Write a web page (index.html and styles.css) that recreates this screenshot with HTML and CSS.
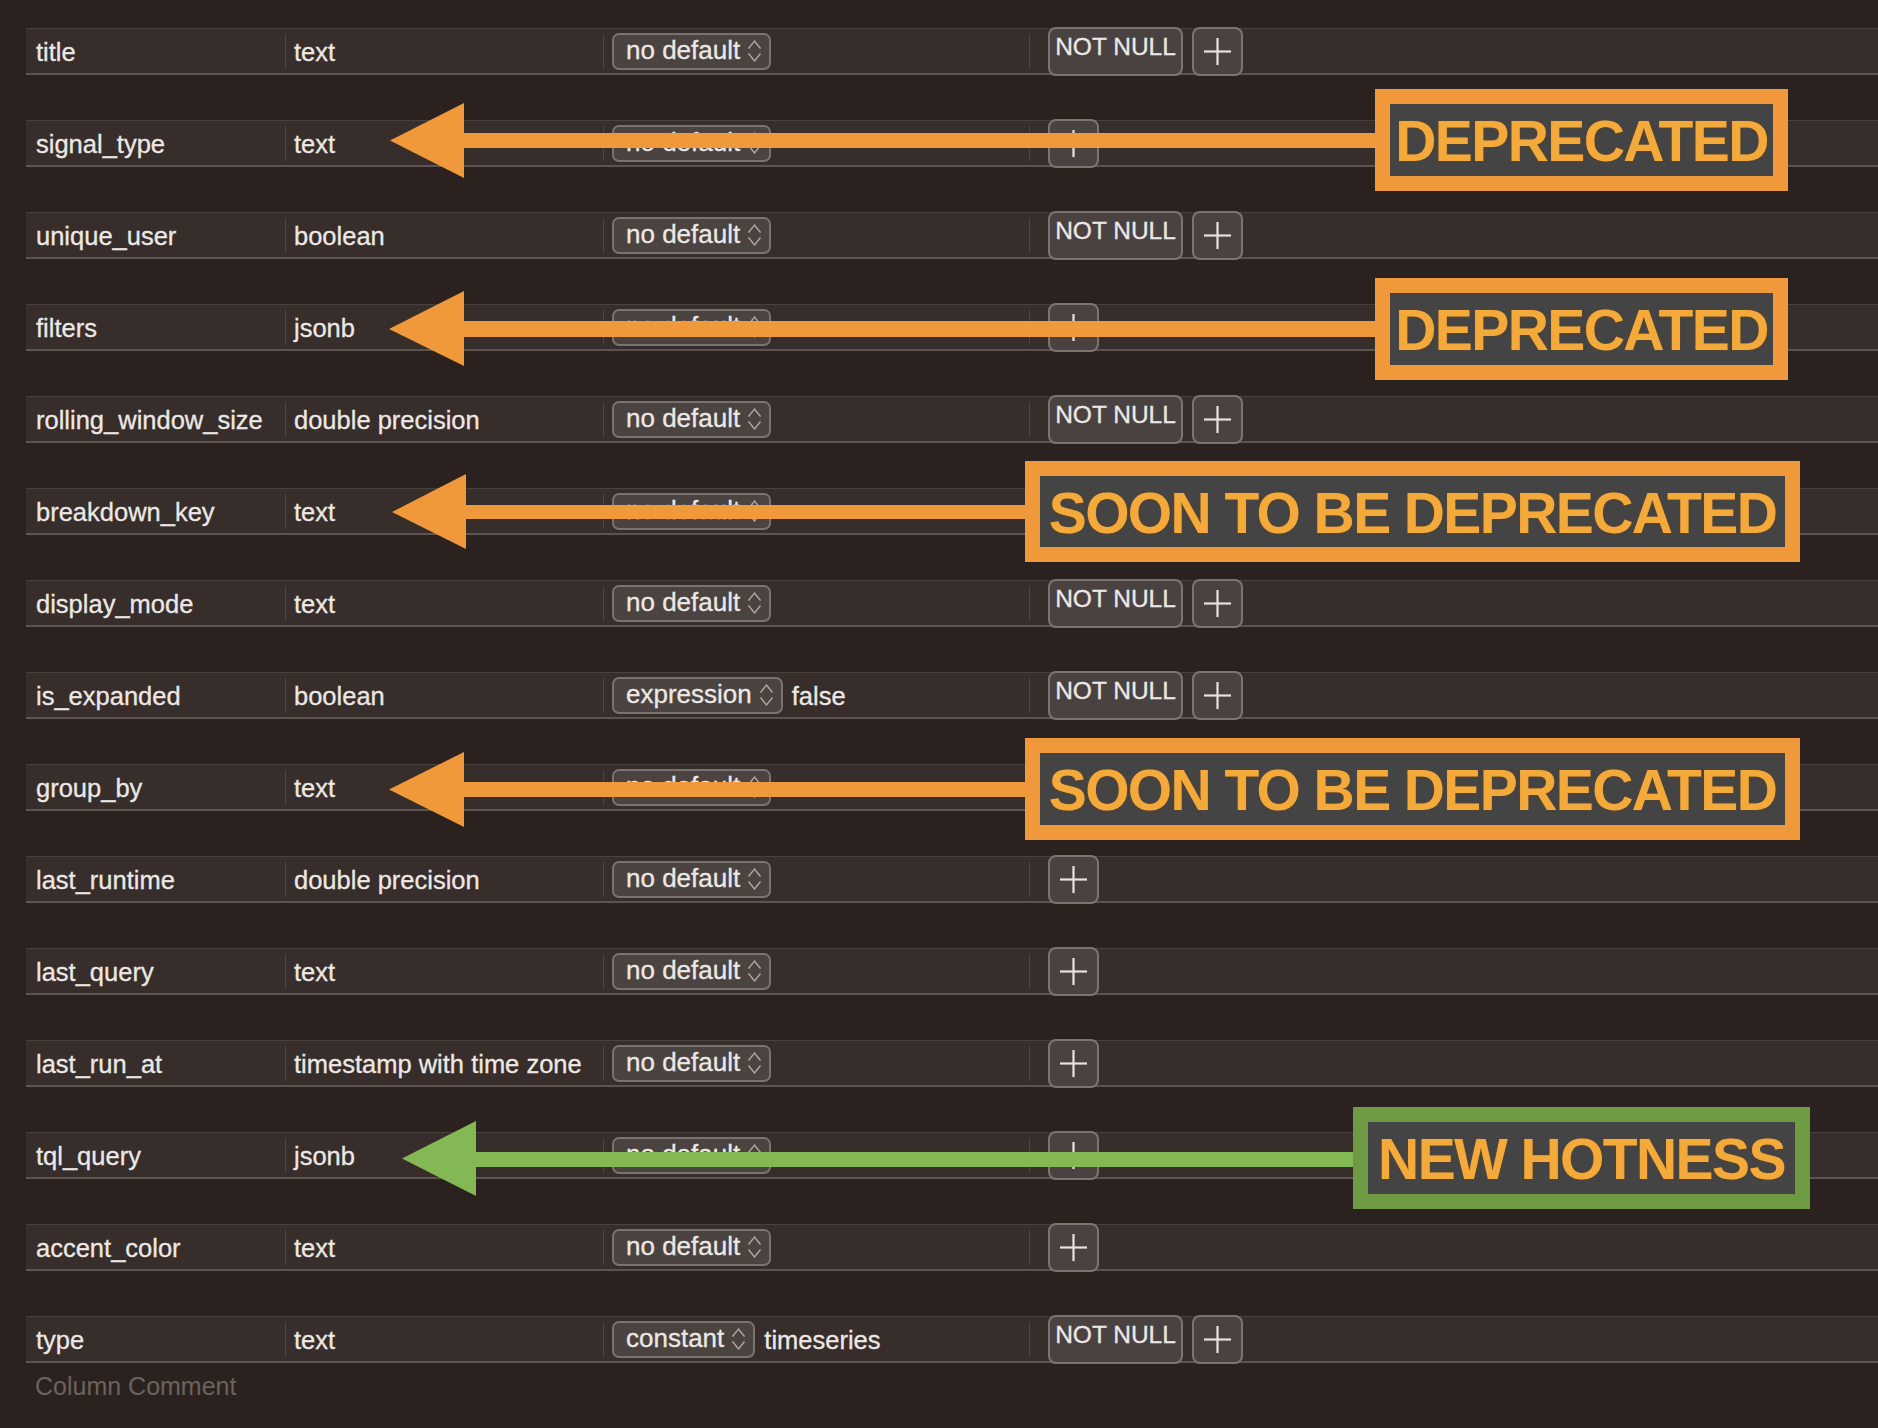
FILE: index.html
```html
<!DOCTYPE html>
<html lang="en">
<head>
    <meta charset="UTF-8">
    <meta name="viewport" content="width=device-width, initial-scale=1.0">
    <title>Table Structure</title>
    <link rel="stylesheet" href="styles.css">
</head>
<body>
    <div class="page">
        <div class="columns">
            <div class="row">
                <div class="cell name">title</div><div class="sep"></div>
                <div class="cell type">text</div><div class="sep"></div>
                <div class="cell default"><span class="select">no default<svg class="chev" viewBox="0 0 15 24"><polyline points="1.5,9.5 7.5,2 13.5,9.5"/><polyline points="1.5,14.5 7.5,22 13.5,14.5"/></svg></span></div><div class="sep"></div>
                <div class="cell flags"><button class="not-null">NOT NULL</button><button class="add"><svg viewBox="0 0 27 27"><line x1="0" y1="13.5" x2="27" y2="13.5"/><line x1="13.5" y1="0" x2="13.5" y2="27"/></svg></button></div>
            </div>
            <div class="row">
                <div class="cell name">signal_type</div><div class="sep"></div>
                <div class="cell type">text</div><div class="sep"></div>
                <div class="cell default"><span class="select">no default<svg class="chev" viewBox="0 0 15 24"><polyline points="1.5,9.5 7.5,2 13.5,9.5"/><polyline points="1.5,14.5 7.5,22 13.5,14.5"/></svg></span></div><div class="sep"></div>
                <div class="cell flags"><button class="add"><svg viewBox="0 0 27 27"><line x1="0" y1="13.5" x2="27" y2="13.5"/><line x1="13.5" y1="0" x2="13.5" y2="27"/></svg></button></div>
            </div>
            <div class="row">
                <div class="cell name">unique_user</div><div class="sep"></div>
                <div class="cell type">boolean</div><div class="sep"></div>
                <div class="cell default"><span class="select">no default<svg class="chev" viewBox="0 0 15 24"><polyline points="1.5,9.5 7.5,2 13.5,9.5"/><polyline points="1.5,14.5 7.5,22 13.5,14.5"/></svg></span></div><div class="sep"></div>
                <div class="cell flags"><button class="not-null">NOT NULL</button><button class="add"><svg viewBox="0 0 27 27"><line x1="0" y1="13.5" x2="27" y2="13.5"/><line x1="13.5" y1="0" x2="13.5" y2="27"/></svg></button></div>
            </div>
            <div class="row">
                <div class="cell name">filters</div><div class="sep"></div>
                <div class="cell type">jsonb</div><div class="sep"></div>
                <div class="cell default"><span class="select">no default<svg class="chev" viewBox="0 0 15 24"><polyline points="1.5,9.5 7.5,2 13.5,9.5"/><polyline points="1.5,14.5 7.5,22 13.5,14.5"/></svg></span></div><div class="sep"></div>
                <div class="cell flags"><button class="add"><svg viewBox="0 0 27 27"><line x1="0" y1="13.5" x2="27" y2="13.5"/><line x1="13.5" y1="0" x2="13.5" y2="27"/></svg></button></div>
            </div>
            <div class="row">
                <div class="cell name">rolling_window_size</div><div class="sep"></div>
                <div class="cell type">double precision</div><div class="sep"></div>
                <div class="cell default"><span class="select">no default<svg class="chev" viewBox="0 0 15 24"><polyline points="1.5,9.5 7.5,2 13.5,9.5"/><polyline points="1.5,14.5 7.5,22 13.5,14.5"/></svg></span></div><div class="sep"></div>
                <div class="cell flags"><button class="not-null">NOT NULL</button><button class="add"><svg viewBox="0 0 27 27"><line x1="0" y1="13.5" x2="27" y2="13.5"/><line x1="13.5" y1="0" x2="13.5" y2="27"/></svg></button></div>
            </div>
            <div class="row">
                <div class="cell name">breakdown_key</div><div class="sep"></div>
                <div class="cell type">text</div><div class="sep"></div>
                <div class="cell default"><span class="select">no default<svg class="chev" viewBox="0 0 15 24"><polyline points="1.5,9.5 7.5,2 13.5,9.5"/><polyline points="1.5,14.5 7.5,22 13.5,14.5"/></svg></span></div><div class="sep"></div>
                <div class="cell flags"><button class="add"><svg viewBox="0 0 27 27"><line x1="0" y1="13.5" x2="27" y2="13.5"/><line x1="13.5" y1="0" x2="13.5" y2="27"/></svg></button></div>
            </div>
            <div class="row">
                <div class="cell name">display_mode</div><div class="sep"></div>
                <div class="cell type">text</div><div class="sep"></div>
                <div class="cell default"><span class="select">no default<svg class="chev" viewBox="0 0 15 24"><polyline points="1.5,9.5 7.5,2 13.5,9.5"/><polyline points="1.5,14.5 7.5,22 13.5,14.5"/></svg></span></div><div class="sep"></div>
                <div class="cell flags"><button class="not-null">NOT NULL</button><button class="add"><svg viewBox="0 0 27 27"><line x1="0" y1="13.5" x2="27" y2="13.5"/><line x1="13.5" y1="0" x2="13.5" y2="27"/></svg></button></div>
            </div>
            <div class="row">
                <div class="cell name">is_expanded</div><div class="sep"></div>
                <div class="cell type">boolean</div><div class="sep"></div>
                <div class="cell default"><span class="select">expression<svg class="chev" viewBox="0 0 15 24"><polyline points="1.5,9.5 7.5,2 13.5,9.5"/><polyline points="1.5,14.5 7.5,22 13.5,14.5"/></svg></span><span class="value">false</span></div><div class="sep"></div>
                <div class="cell flags"><button class="not-null">NOT NULL</button><button class="add"><svg viewBox="0 0 27 27"><line x1="0" y1="13.5" x2="27" y2="13.5"/><line x1="13.5" y1="0" x2="13.5" y2="27"/></svg></button></div>
            </div>
            <div class="row">
                <div class="cell name">group_by</div><div class="sep"></div>
                <div class="cell type">text</div><div class="sep"></div>
                <div class="cell default"><span class="select">no default<svg class="chev" viewBox="0 0 15 24"><polyline points="1.5,9.5 7.5,2 13.5,9.5"/><polyline points="1.5,14.5 7.5,22 13.5,14.5"/></svg></span></div><div class="sep"></div>
                <div class="cell flags"><button class="add"><svg viewBox="0 0 27 27"><line x1="0" y1="13.5" x2="27" y2="13.5"/><line x1="13.5" y1="0" x2="13.5" y2="27"/></svg></button></div>
            </div>
            <div class="row">
                <div class="cell name">last_runtime</div><div class="sep"></div>
                <div class="cell type">double precision</div><div class="sep"></div>
                <div class="cell default"><span class="select">no default<svg class="chev" viewBox="0 0 15 24"><polyline points="1.5,9.5 7.5,2 13.5,9.5"/><polyline points="1.5,14.5 7.5,22 13.5,14.5"/></svg></span></div><div class="sep"></div>
                <div class="cell flags"><button class="add"><svg viewBox="0 0 27 27"><line x1="0" y1="13.5" x2="27" y2="13.5"/><line x1="13.5" y1="0" x2="13.5" y2="27"/></svg></button></div>
            </div>
            <div class="row">
                <div class="cell name">last_query</div><div class="sep"></div>
                <div class="cell type">text</div><div class="sep"></div>
                <div class="cell default"><span class="select">no default<svg class="chev" viewBox="0 0 15 24"><polyline points="1.5,9.5 7.5,2 13.5,9.5"/><polyline points="1.5,14.5 7.5,22 13.5,14.5"/></svg></span></div><div class="sep"></div>
                <div class="cell flags"><button class="add"><svg viewBox="0 0 27 27"><line x1="0" y1="13.5" x2="27" y2="13.5"/><line x1="13.5" y1="0" x2="13.5" y2="27"/></svg></button></div>
            </div>
            <div class="row">
                <div class="cell name">last_run_at</div><div class="sep"></div>
                <div class="cell type">timestamp with time zone</div><div class="sep"></div>
                <div class="cell default"><span class="select">no default<svg class="chev" viewBox="0 0 15 24"><polyline points="1.5,9.5 7.5,2 13.5,9.5"/><polyline points="1.5,14.5 7.5,22 13.5,14.5"/></svg></span></div><div class="sep"></div>
                <div class="cell flags"><button class="add"><svg viewBox="0 0 27 27"><line x1="0" y1="13.5" x2="27" y2="13.5"/><line x1="13.5" y1="0" x2="13.5" y2="27"/></svg></button></div>
            </div>
            <div class="row">
                <div class="cell name">tql_query</div><div class="sep"></div>
                <div class="cell type">jsonb</div><div class="sep"></div>
                <div class="cell default"><span class="select">no default<svg class="chev" viewBox="0 0 15 24"><polyline points="1.5,9.5 7.5,2 13.5,9.5"/><polyline points="1.5,14.5 7.5,22 13.5,14.5"/></svg></span></div><div class="sep"></div>
                <div class="cell flags"><button class="add"><svg viewBox="0 0 27 27"><line x1="0" y1="13.5" x2="27" y2="13.5"/><line x1="13.5" y1="0" x2="13.5" y2="27"/></svg></button></div>
            </div>
            <div class="row">
                <div class="cell name">accent_color</div><div class="sep"></div>
                <div class="cell type">text</div><div class="sep"></div>
                <div class="cell default"><span class="select">no default<svg class="chev" viewBox="0 0 15 24"><polyline points="1.5,9.5 7.5,2 13.5,9.5"/><polyline points="1.5,14.5 7.5,22 13.5,14.5"/></svg></span></div><div class="sep"></div>
                <div class="cell flags"><button class="add"><svg viewBox="0 0 27 27"><line x1="0" y1="13.5" x2="27" y2="13.5"/><line x1="13.5" y1="0" x2="13.5" y2="27"/></svg></button></div>
            </div>
            <div class="row">
                <div class="cell name">type</div><div class="sep"></div>
                <div class="cell type">text</div><div class="sep"></div>
                <div class="cell default"><span class="select">constant<svg class="chev" viewBox="0 0 15 24"><polyline points="1.5,9.5 7.5,2 13.5,9.5"/><polyline points="1.5,14.5 7.5,22 13.5,14.5"/></svg></span><span class="value">timeseries</span></div><div class="sep"></div>
                <div class="cell flags"><button class="not-null">NOT NULL</button><button class="add"><svg viewBox="0 0 27 27"><line x1="0" y1="13.5" x2="27" y2="13.5"/><line x1="13.5" y1="0" x2="13.5" y2="27"/></svg></button></div>
            </div>
        </div>
        <div class="comment">Column Comment</div>

        <!-- annotation arrows drawn over the table -->
        <svg class="arrows" width="1878" height="1428" viewBox="0 0 1878 1428">
            <g class="orange">
                <polygon points="390,140.5 464,103 464,178"/>
                <rect x="463" y="133" width="914" height="15"/>
                <polygon points="389,329 464,291 464,366"/>
                <rect x="463" y="321" width="914" height="16"/>
                <polygon points="392,512 466,474 466,549"/>
                <rect x="465" y="505" width="562" height="14"/>
                <polygon points="389,789.5 464,752 464,827"/>
                <rect x="463" y="782" width="564" height="15"/>
            </g>
            <g class="green">
                <polygon points="402,1158.5 476,1121 476,1196"/>
                <rect x="475" y="1152" width="881" height="15"/>
            </g>
        </svg>
        <div class="callout deprecated-a">DEPRECATED</div>
        <div class="callout deprecated-b">DEPRECATED</div>
        <div class="callout soon-a">SOON TO BE DEPRECATED</div>
        <div class="callout soon-b">SOON TO BE DEPRECATED</div>
        <div class="callout hotness">NEW HOTNESS</div>
    </div>
</body>
</html>
```

FILE: styles.css
```css
html, body {
    margin: 0;
    background-color: #2b221f;
}

body {
    color: #ece8e5;
    font-family: "Liberation Sans", Arial, sans-serif;
    overflow: hidden;
}

.page {
    position: relative;
    width: 1878px;
    height: 1428px;
    padding: 28px 0 0 26px;
    box-sizing: border-box;
}

.row {
    display: flex;
    align-items: center;
    height: 47px;
    box-sizing: border-box;
    margin-bottom: 45px;
    background-color: #372d2a;
    border-top: 1px solid #4a403c;
    border-bottom: 2px solid #5d5450;
    font-size: 25.5px;
    -webkit-text-stroke: 0.3px #ece8e5;
}

.row:last-child {
    margin-bottom: 0;
}

.cell {
    display: flex;
    align-items: center;
    height: 100%;
    white-space: nowrap;
    padding-top: 2px;
    box-sizing: border-box;
}

.sep {
    width: 1px;
    height: 35px;
    background-color: #4e4541;
    flex: none;
}

.name {
    width: 259px;
    padding-left: 10px;
}

.type {
    width: 317px;
    padding-left: 8px;
}

.default {
    width: 425px;
    padding-left: 8px;
    padding-top: 0;
}

.flags {
    flex: 1;
    padding-left: 18px;
    padding-top: 0;
    gap: 9px;
}

.select {
    display: inline-flex;
    align-items: center;
    gap: 7px;
    height: 37px;
    box-sizing: border-box;
    padding: 0 7px 2px 12px;
    background-color: #4b4340;
    border: 2px solid #7a726e;
    border-radius: 7px;
    font-size: 26px;
}

.chev {
    width: 15px;
    height: 24px;
    margin-top: 2px;
}

.chev polyline {
    fill: none;
    stroke: #b3aba7;
    stroke-width: 1.3;
}

.value {
    margin-left: 9px;
    padding-top: 2px;
}

button {
    font-family: inherit;
    color: inherit;
    background-color: #4a4240;
    border: 2px solid #7c7470;
    border-radius: 8px;
    height: 49px;
    box-sizing: border-box;
    flex: none;
}

.not-null {
    width: 135px;
    font-size: 24.5px;
    line-height: 28px;
    padding: 4px 0 0 0;
    align-self: center;
    display: flex;
    align-items: flex-start;
    justify-content: center;
}

.add {
    width: 51px;
    padding: 0;
    display: flex;
    align-items: center;
    justify-content: center;
}

.add svg {
    width: 27px;
    height: 27px;
}

.add line {
    stroke: #e6e2df;
    stroke-width: 2.2;
}

.comment {
    margin-top: 8px;
    padding-left: 9px;
    font-size: 25px;
    line-height: 30px;
    color: #6b625e;
}

/* annotations */
.arrows {
    position: absolute;
    left: 0;
    top: 0;
    pointer-events: none;
}

.arrows .orange {
    fill: #f0993a;
}

.arrows .green {
    fill: #84b855;
}

.callout {
    position: absolute;
    box-sizing: border-box;
    border: 15px solid #f0993a;
    background-color: #444444;
    color: #f4aa3b;
    font-weight: bold;
    font-size: 57px;
    letter-spacing: -1.6px;
    display: flex;
    align-items: center;
    justify-content: center;
    white-space: nowrap;
    text-shadow: 0 0 1.5px rgba(140, 80, 20, 0.9);
    padding-top: 2px;
}

.deprecated-a {
    left: 1375px;
    top: 89px;
    width: 413px;
    height: 102px;
}

.deprecated-b {
    left: 1375px;
    top: 278px;
    width: 413px;
    height: 102px;
}

.soon-a {
    left: 1025px;
    top: 461px;
    width: 775px;
    height: 101px;
}

.soon-b {
    left: 1025px;
    top: 738px;
    width: 775px;
    height: 102px;
}

.hotness {
    left: 1353px;
    top: 1107px;
    width: 457px;
    height: 102px;
    border-color: #6f9a44;
}
```
